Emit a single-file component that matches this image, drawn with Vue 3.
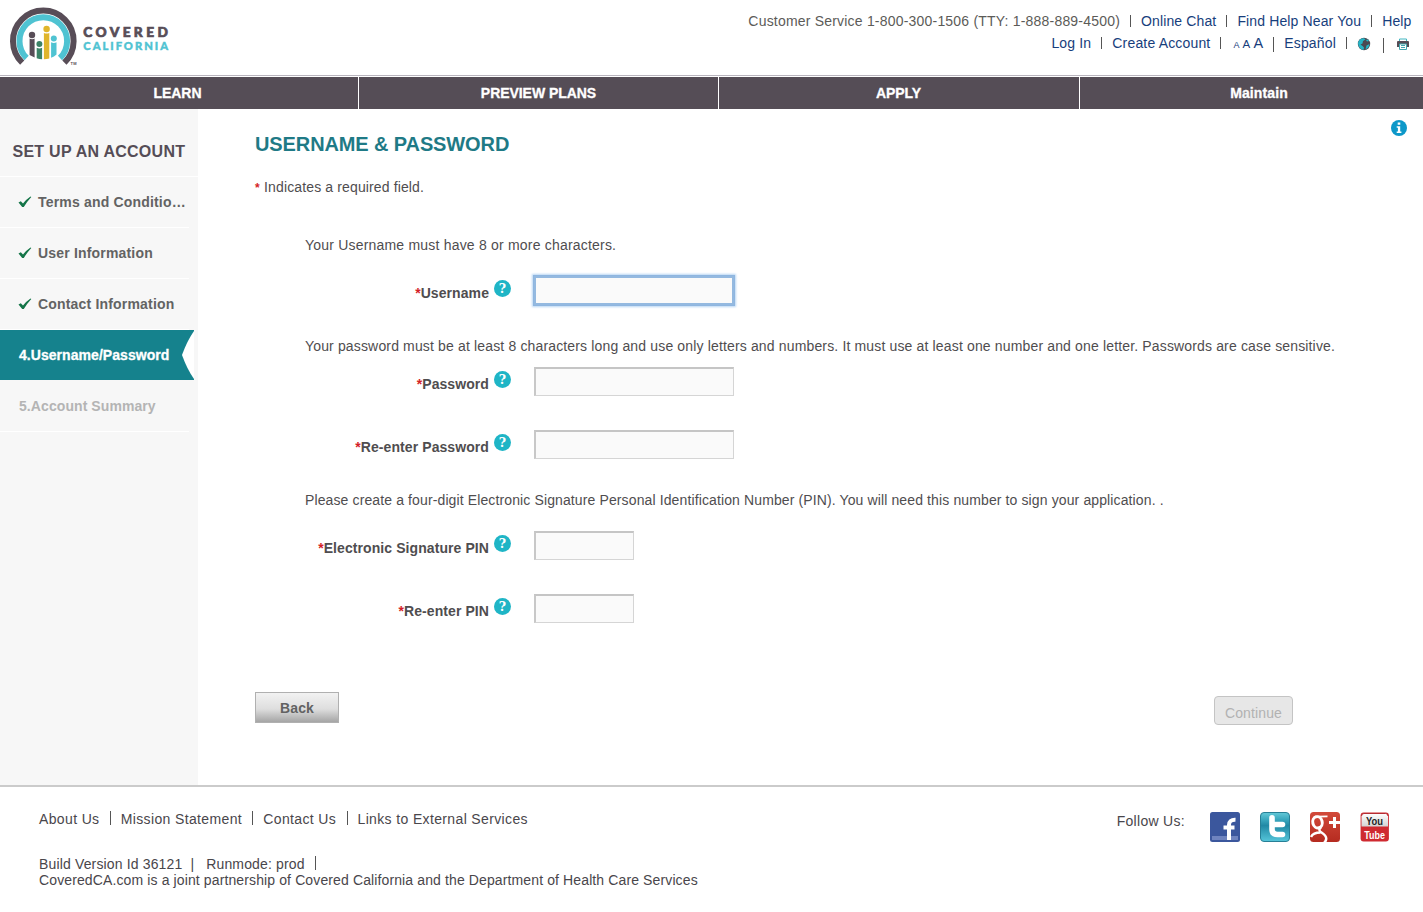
<script setup>
const nav = ['LEARN', 'PREVIEW PLANS', 'APPLY', 'Maintain']
const done = ['Terms and Conditio…', 'User Information', 'Contact Information']
const groups = [
  { id: 'user', text: 'Your Username must have 8 or more characters.', fields: [{ label: 'Username', focus: true }] },
  {
    id: 'pass',
    text: 'Your password must be at least 8 characters long and use only letters and numbers. It must use at least one number and one letter. Passwords are case sensitive.',
    fields: [{ label: 'Password' }, { label: 'Re-enter Password' }]
  },
  {
    id: 'pin',
    text: 'Please create a four-digit Electronic Signature Personal Identification Number (PIN). You will need this number to sign your application. .',
    fields: [{ label: 'Electronic Signature PIN', short: true }, { label: 'Re-enter PIN', short: true }]
  }
]
</script>

<template>
  <div class="page">
    <header class="header">
      <svg class="logo" width="180" height="74" viewBox="0 0 180 74">
        <g fill="none">
          <path d="M22.2 62.6A30.3 30.3 0 1 1 64.4 62.6" stroke="#584d57" stroke-width="6" />
          <path d="M26.6 58A23.8 23.8 0 1 1 60 58" stroke="#4fc3d2" stroke-width="6" />
        </g>
        <g fill="#584d57"><circle cx="32" cy="35" r="3.2" /><path d="M29.6 38.6q2.500 1.200 5 0V57.500l-5-2.600z" /></g>
        <g fill="#3b8266"><circle cx="39.400" cy="44" r="3" /><path d="M36.700 47.800q2.700 1.200 5.400 0V59.300q-3 0-5.400-1z" /></g>
        <g fill="#e0b52b"><circle cx="46.600" cy="29" r="3.200" /><path d="M43.900 33q2.700 1.200 5.400 0V58.500q-2.600.8-5.400.8z" /></g>
        <g fill="#4fc3d2"><circle cx="53.800" cy="38.500" r="3" /><path d="M51.100 42.300q2.700 1.200 5.400 0V54.500q-2.400 2.200-5.400 3.200z" /></g>
        <text x="70.500" y="64.500" class="tm" textLength="6">TM</text>
        <text x="83.300" y="37" class="brand-top" textLength="84.500">COVERED</text>
        <text x="83.300" y="50.400" class="brand-bottom" textLength="84.700">CALIFORNIA</text>
      </svg>
      <div class="utility">
        <div class="links top-links">
          <span class="service">Customer Service 1-800-300-1506 (TTY: 1-888-889-4500)</span><i></i>
          <a>Online Chat</a><i></i><a>Find Help Near You</a><i></i><a>Help</a>
        </div>
        <div class="links low-links">
          <a>Log In</a><i></i><a>Create Account</a><i></i>
          <span class="sizes"><a>A</a><a>A</a><a>A</a></span><i class="tall"></i>
          <a>Español</a><i></i>
          <svg class="globe" width="14" height="14" viewBox="0 0 14 14">
            <circle cx="7" cy="7" r="6.200" fill="#4b4851" />
            <path d="M1 6Q2 1 7 1.200L8.500 2.500 6 4 5.500 6.500 3.500 7.500 5.500 9 7 10.500 6.500 13Q1.500 12 1 6M9 3l2-.5 1 1.500-2 .5zM9.500 8.500l3-1.500q-.5 4-4 5.500z" fill="#25b4c5" />
          </svg>
          <i class="tall second"></i>
          <svg class="printer" width="14" height="14" viewBox="0 0 14 14">
            <path d="M3.500 4V2h7v2" fill="#fff" stroke="#42b6c0" />
            <path d="M1 5q0-1 1-1h10q1 0 1 1v5h-2V7H3v3H1z" fill="#554d56" />
            <path d="M3.500 7h7v5.500h-7zM5 8.500h4M5 10.500h4" fill="#fff" stroke="#42a6ae" />
          </svg>
        </div>
      </div>
    </header>

    <nav class="nav"><a v-for="item in nav" :key="item">{{ item }}</a></nav>

    <div class="body">
      <aside class="sidebar">
        <h2>SET UP AN ACCOUNT</h2>
        <div v-for="step in done" :key="step" class="step">
          <svg width="14" height="12" viewBox="0 0 14 12">
            <path d="M.5 6.500l2.300-1.300L5 7.600Q8 3.600 12.500.6l.8.3Q9 5.500 5.800 11H4.200z" fill="#147548" />
          </svg>
          <span>{{ step }}</span>
        </div>
        <div class="step current">
          <span>4.Username/Password</span>
          <svg class="notch" width="12" height="50" viewBox="0 0 12 50"><path d="M12 1Q5 11 0 25 5 39 12 49z" fill="#fff" /></svg>
        </div>
        <div class="step later"><span>5.Account Summary</span></div>
      </aside>

      <main class="main">
        <svg class="info" width="16" height="16" viewBox="0 0 16 16">
          <circle cx="8" cy="8" r="8" fill="#0d98c9" />
          <path d="M6.700 2.500h2.600v2.300H6.700zM5.700 6.300h3.500v5.200h1.200V13H5.700v-1.500h1.200V7.700H5.700z" fill="#fff" />
        </svg>
        <h1>USERNAME &amp; PASSWORD</h1>
        <p class="required"><b>*</b> Indicates a required field.</p>

        <section v-for="g in groups" :key="g.id" class="group" :class="g.id">
          <p>{{ g.text }}</p>
          <div v-for="f in g.fields" :key="f.label" class="field">
            <label><b>*</b>{{ f.label }}</label>
            <svg width="18" height="18" viewBox="0 0 18 18">
              <circle cx="8.500" cy="8.500" r="8.500" fill="#1fb5c6" />
              <text x="8.500" y="13" text-anchor="middle" class="q">?</text>
            </svg>
            <input type="text" :class="{ short: f.short, focus: f.focus }" />
          </div>
        </section>

        <div class="actions">
          <button class="back">Back</button>
          <button class="continue">Continue</button>
        </div>
      </main>
    </div>

    <footer class="footer">
      <div class="foot-text">
        <div class="foot-links">
          <a>About Us</a><i></i><a>Mission Statement</a><i></i><a>Contact Us</a><i></i><a>Links to External Services</a>
        </div>
        <div class="build"><span>Build Version Id 36121</span><em>|</em><span>Runmode: prod</span><i></i></div>
        <p>CoveredCA.com is a joint partnership of Covered California and the Department of Health Care Services</p>
      </div>
      <div class="follow">
        <span>Follow Us:</span>
        <svg viewBox="0 0 30 30">
          <rect width="30" height="30" rx="2.500" fill="#3b579d" />
          <path d="M2 24h26v4H2z" fill="#6f84bf" />
          <path d="M19 28V13q0-5.500 6.500-5.200M13.500 15.500h11" fill="none" stroke="#fff" stroke-width="4" />
        </svg>
        <svg viewBox="0 0 30 30">
          <defs>
            <linearGradient id="tw" x1="0" y1="0" x2="0" y2="1">
              <stop offset="0" stop-color="#63c9d8" /><stop offset=".25" stop-color="#39a6bd" /><stop offset=".45" stop-color="#2189a5" /><stop offset="1" stop-color="#56c6da" />
            </linearGradient>
          </defs>
          <rect x=".5" y=".5" width="29" height="29" rx="3.500" fill="url(#tw)" stroke="#277f96" />
          <path d="M12 5.800V17q0 5.500 5.500 5.500H22.500M12 12.500h10.500" fill="none" stroke="#fff" stroke-width="5.600" stroke-linecap="round" />
        </svg>
        <svg viewBox="0 0 30 30">
          <defs>
            <linearGradient id="gp" x1="0" y1="0" x2="0" y2="1"><stop offset="0" stop-color="#d24a3a" /><stop offset="1" stop-color="#b52b20" /></linearGradient>
            <clipPath id="gc"><rect width="30" height="30" rx="3.500" /></clipPath>
          </defs>
          <g clip-path="url(#gc)">
            <rect width="30" height="30" fill="url(#gp)" />
            <g fill="none" stroke="#fff">
              <ellipse cx="7.500" cy="10.300" rx="4.700" ry="5.700" stroke-width="3" transform="rotate(-15 7.500 10.300)" />
              <path d="M7 4.600L17.500 4.300" stroke-width="1.800" />
              <path d="M11 15.500q-3.500 2.500.5 5 5 3 4.700 6.500-.4 2.500-2.200 4M10.500 20.500Q3 20.500 1 25" stroke-width="2.500" />
              <path d="M24.500 5v11M19 10.500h11" stroke-width="3" />
            </g>
          </g>
        </svg>
        <svg viewBox="0 0 30 30">
          <defs>
            <linearGradient id="yt" x1="0" y1="0" x2="0" y2="1"><stop offset="0" stop-color="#fff" /><stop offset="1" stop-color="#d4d4d4" /></linearGradient>
          </defs>
          <rect x=".6" y=".6" width="28.300" height="28.800" rx="3" fill="#cf2a31" />
          <path d="M1.500 4q0-2.500 2.500-2.500h21.500Q28 1.500 28 4v10.500H1.500z" fill="url(#yt)" />
          <path d="M1.500 4q0-2.500 2.500-2.500h21.500Q28 1.500 28 4" fill="none" stroke="#b52b31" />
          <text x="6" y="12.900" class="you" textLength="17" lengthAdjust="spacingAndGlyphs">You</text>
          <text x="4.200" y="26.500" class="tube" textLength="20.700" lengthAdjust="spacingAndGlyphs">Tube</text>
        </svg>
      </div>
    </footer>
  </div>
</template>

<style>
body { margin: 0; background: #fff; }
</style>

<style scoped>
* { box-sizing: border-box; }
.page { width: 1423px; height: 912px; overflow: hidden; font: 14px/16px "Liberation Sans", Arial, sans-serif; letter-spacing: .13px; color: #4f4d4f; }
h1, h2, p { margin: 0; }
a, span, label { white-space: nowrap; }

.header { height: 77px; display: flex; justify-content: space-between; background: linear-gradient(#b9b5be, #b9b5be) 0 75px / 100% 1px no-repeat; }
.logo { display: block; }
.tm { font: bold 4px "Liberation Sans", sans-serif; fill: #584d57; letter-spacing: 0; }
.brand-top { font: 900 13.700px Lato, sans-serif; fill: #584d57; letter-spacing: 0; stroke: #584d57; stroke-width: .7px; }
.brand-bottom { font: 900 11.200px Lato, sans-serif; fill: #4fc3d2; letter-spacing: 0; stroke: #4fc3d2; stroke-width: .4px; }
.utility { padding: 13px 11px 0 0; }
.links { display: flex; justify-content: flex-end; height: 22px; color: #5c5b58; }
.links a { color: #173e7c; }
.top-links { padding-right: .5px; }
.service { letter-spacing: .2px; }
i { flex: none; width: 1px; height: 12px; margin: 2px 10px 0; background: #555; }
.low-links { padding-right: 2px; }
.low-links > a { letter-spacing: .17px; }
.sizes { display: flex; align-items: baseline; gap: 3px; padding-left: 2px; }
.sizes a:nth-child(1) { font-size: 9px; }
.sizes a:nth-child(2) { font-size: 11.500px; }
.sizes a:nth-child(3) { font-size: 14.500px; }
.tall { height: 15px; }
.globe { margin: 2px 1px 0 0; }
.second { margin: 3px 12px 0 11px; }
.printer { margin-top: 2px; }

.nav { height: 32px; display: flex; overflow: hidden; background: #554d56; }
.nav a { flex: none; width: 361px; padding-right: 1px; border-right: 1px solid #fff; text-align: center; font-weight: bold; line-height: 32px; color: #fff; letter-spacing: -.05px; -webkit-text-stroke: .3px #fff; }
.nav a:nth-child(1) { width: 359px; padding-right: 3px; }
.nav a:nth-child(2) { width: 360px; padding-right: 0; }
.nav a:nth-child(4) { padding-right: 2px; letter-spacing: .1px; }

.body { display: flex; height: 676px; }
.sidebar { width: 198px; background: #f7f7f7; }
.sidebar h2 { height: 68px; padding: 33px 0 0 12.500px; border-bottom: 1px solid #fff; font-size: 16px; line-height: 20px; letter-spacing: .26px; color: #554d56; }
.step { position: relative; display: flex; align-items: center; width: 189px; height: 51px; padding: 0 0 1px 18px; border-bottom: 1px solid #fff; font-weight: bold; letter-spacing: .18px; color: #636363; }
.step svg { flex: none; margin-right: 6px; }
.step .notch { position: absolute; right: 0; top: 0; margin: 0; }
.current { width: 194px; height: 50px; margin: 0 0 1px; padding: 0 0 0 19px; border: 0; background: #15828d; color: #fff; letter-spacing: .05px; -webkit-text-stroke: .3px #fff; }
.later { padding-left: 19px; height: 51px; color: #b4b4b4; letter-spacing: .08px; }

.main { position: relative; flex: 1; padding: 23px 0 0 57px; }
.info { position: absolute; left: 1193px; top: 11px; }
h1 { font-size: 20px; line-height: 24px; letter-spacing: -.11px; color: #1f7a86; }
.required { height: 16px; margin-top: 23px; }
.required b { font-size: 12px; line-height: 0; letter-spacing: .4px; }
b { color: #d41f28; }
.group { padding-left: 50px; }
.user { margin-top: 42px; }
.user p { letter-spacing: .2px; }
.pass { margin-top: 33px; }
.pass p { letter-spacing: .152px; }
.pin { margin-top: 33px; }
.pin p { letter-spacing: .12px; }
.field { display: flex; align-items: flex-start; height: 29px; }
.user .field { margin-top: 23px; }
.pass .field { margin-top: 13px; }
.pin .field { margin-top: 23px; }
.group .field + .field { margin-top: 34px; }
label { width: 184px; margin-top: 9px; text-align: right; font-weight: bold; letter-spacing: .08px; }
.field svg { margin: 4px 22px 0 5px; flex: none; }
.q { font: bold 12.500px "DejaVu Serif", serif; fill: #fff; letter-spacing: 0; }
input { width: 200px; height: 29px; margin: 0; padding: 0; border: 1px solid #d2d2d2; border-width: 2px 1px 1px 2px; border-color: #c5c5c5 #d5d5d5 #d5d5d5 #c8c8c8; background: #fafafa; outline: 0; }
input.short { width: 100px; }
input.focus { border: 2px solid #94b9e0; box-shadow: 0 0 0 1px #8fb6e0, 0 0 2px 2px #b9d6f4; }

.actions { display: flex; justify-content: space-between; align-items: flex-start; width: 1038px; margin-top: 69px; }
button { padding: 0; font: 14px/16px "Liberation Sans", Arial, sans-serif; letter-spacing: .13px; }
.back { width: 84px; height: 31px; border: 1px solid #b0b0b0; background: linear-gradient(#f2f2f2, #dedede 55%, #a5a5a5); font-weight: bold; color: #626262; }
.continue { width: 79px; height: 29px; margin-top: 4px; padding-top: 4px; border: 1px solid #c4c4c4; border-radius: 4px; background: #e7e7e7; color: #b2b2b2; }

.footer { display: flex; justify-content: space-between; height: 127px; padding: 24px 33px 0 39px; border-top: 2px solid #cbcbcb; color: #49464b; }
.foot-links { display: flex; height: 45px; letter-spacing: .36px; }
.foot-links i { margin: 0 10px 0 10.300px; height: 14px; }
.build { display: flex; height: 16px; letter-spacing: .15px; }
.build em { margin: 0 12px 0 8px; font-style: normal; }
.build i { margin-top: 0; height: 14px; }
.foot-text p { letter-spacing: .12px; }
.follow { display: flex; align-items: flex-start; gap: 20px; }
.follow span { margin: 2px 5px 0 0; letter-spacing: .3px; }
.follow svg { width: 30px; height: 30px; margin-top: 1px; overflow: visible; }
.you { font: bold 11.500px "Liberation Sans", sans-serif; fill: #242424; letter-spacing: 0; }
.tube { font: bold 11.500px "Liberation Sans", sans-serif; fill: #fff; letter-spacing: 0; }
</style>
